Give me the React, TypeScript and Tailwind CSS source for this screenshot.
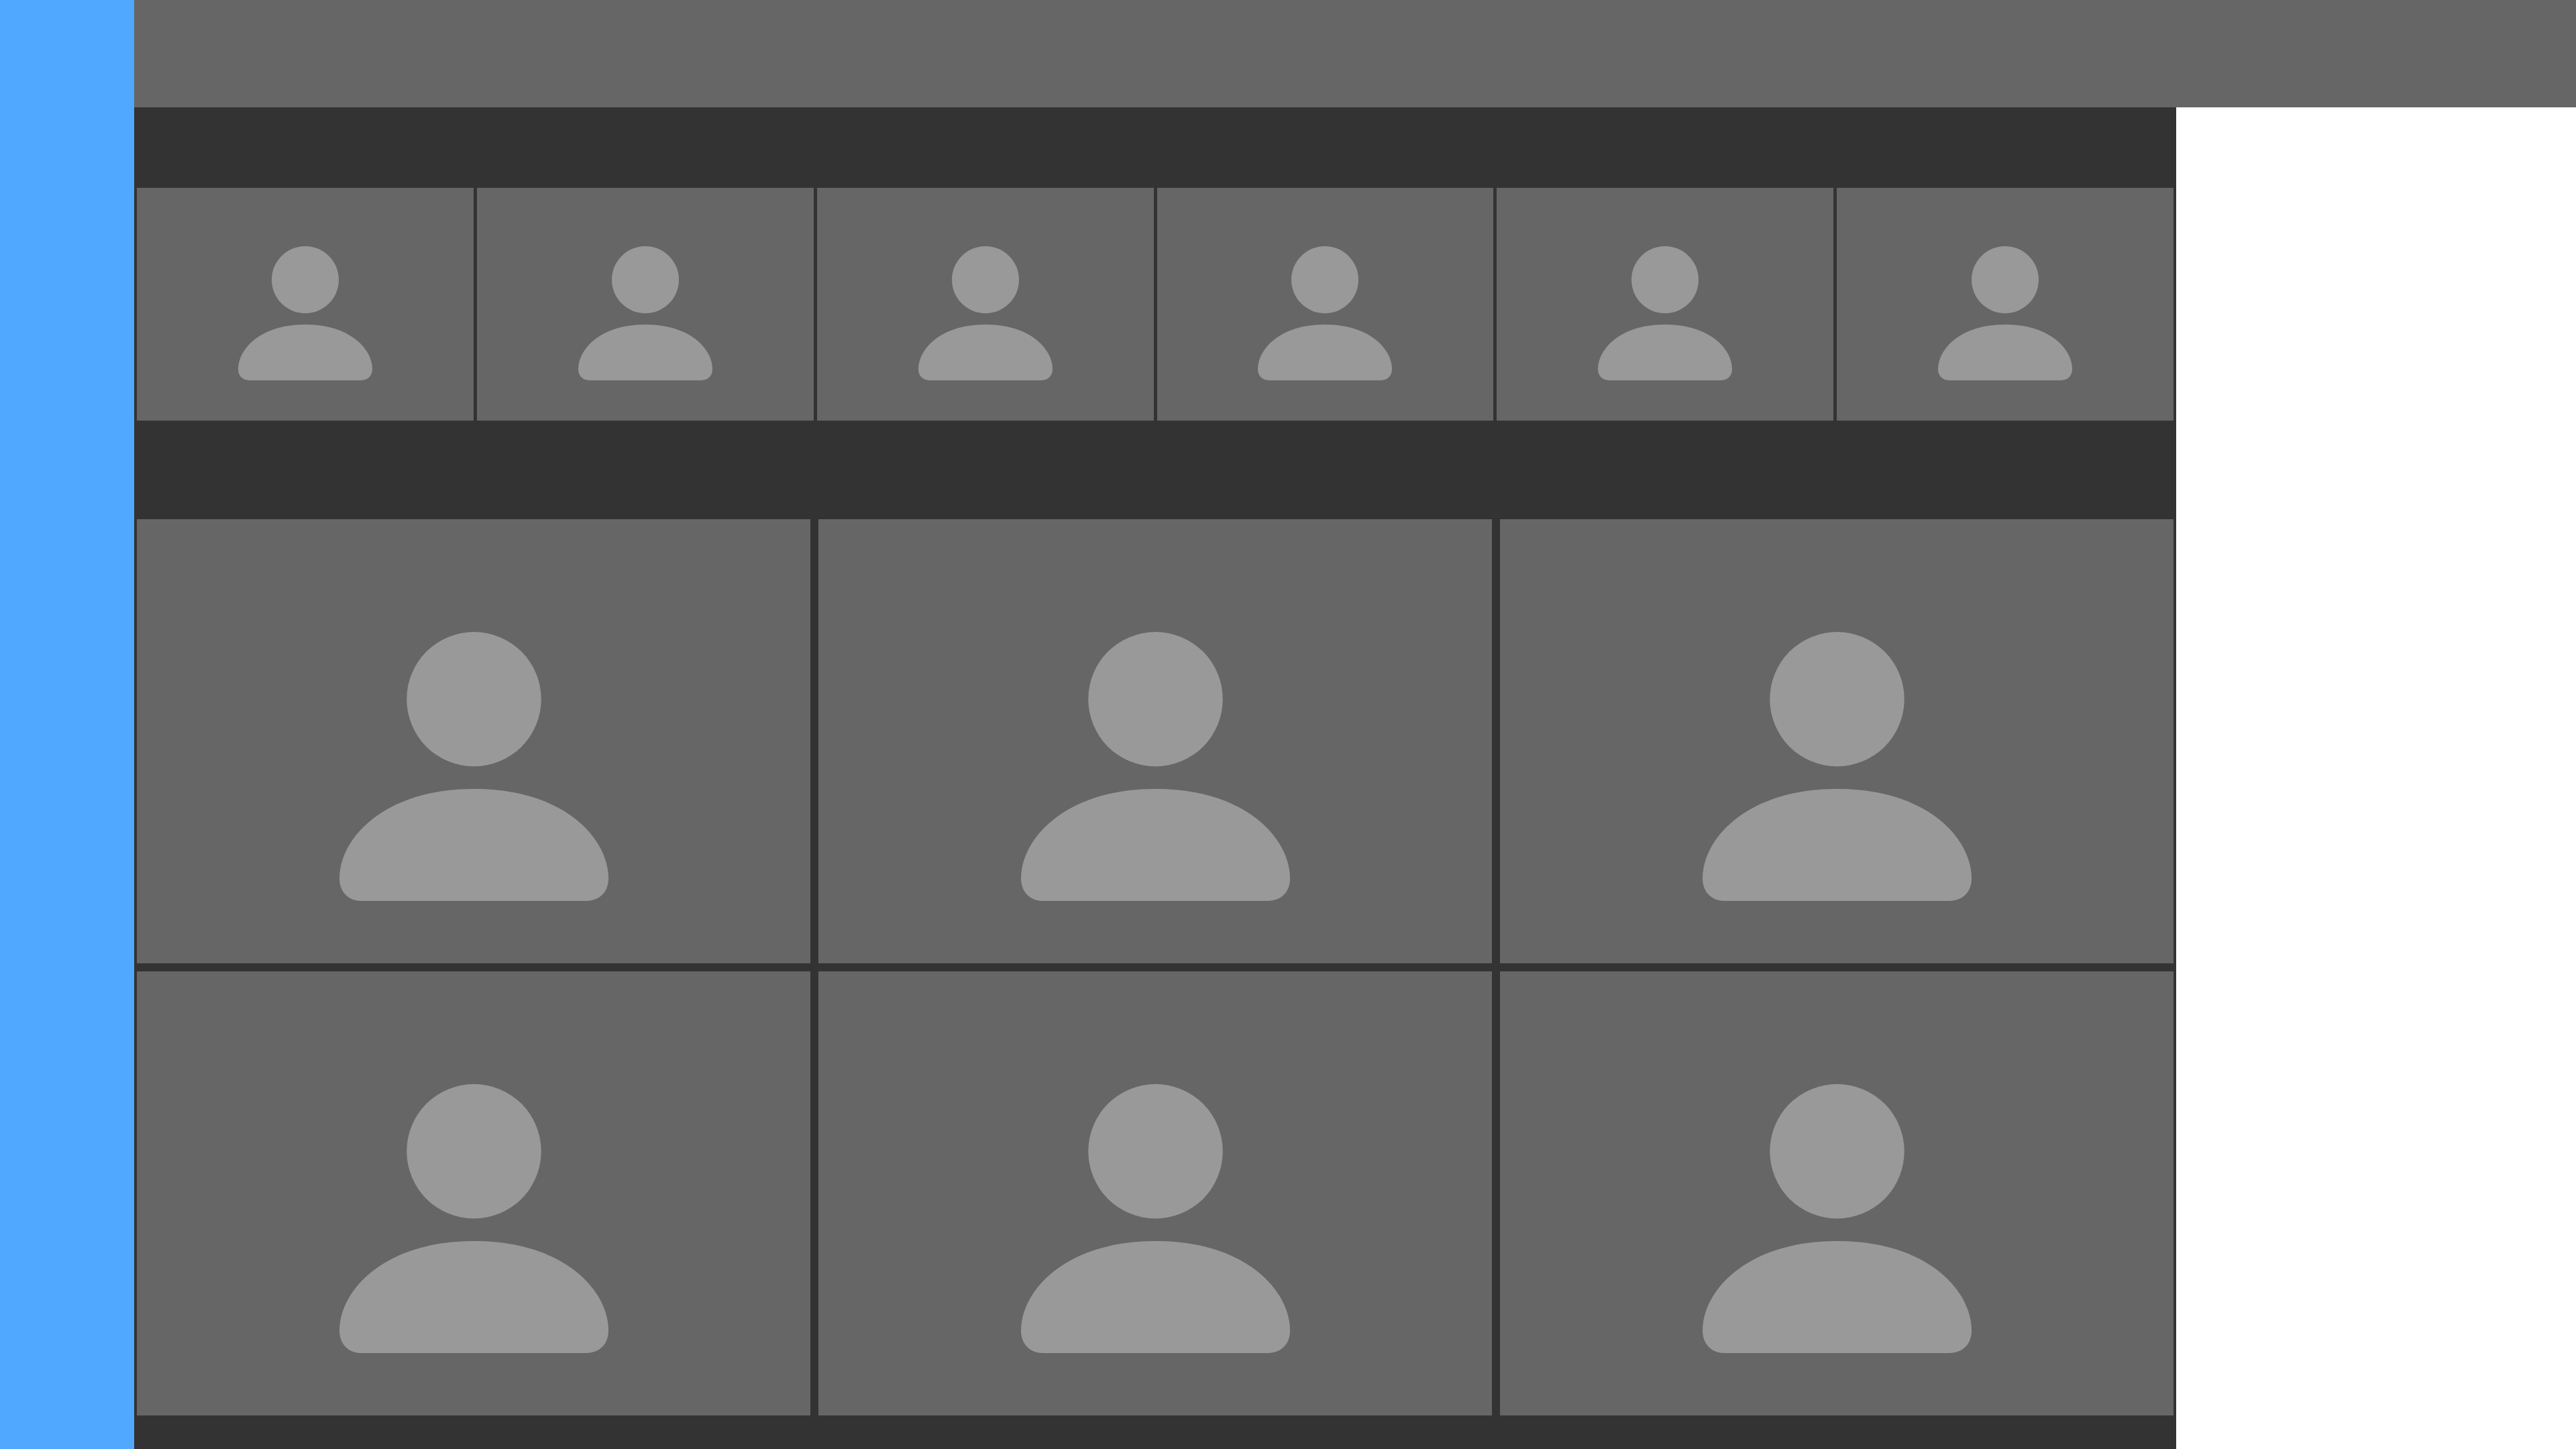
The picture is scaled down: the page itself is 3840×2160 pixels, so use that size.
import React from "react";

type TileSize = "small" | "large";

function PersonIcon({ size }: { size: TileSize }) {
  return (
    <svg
      viewBox="0 0 48 48"
      aria-hidden="true"
      className={size === "small" ? "size-[200px] fill-[#999999]" : "size-[401px] fill-[#999999]"}
    >
      <circle cx="24" cy="12" r="12" />
      <path d="M24 28C8 28 0 36.8 0 44C0 46.4 1.6 48 4 48H44C46.4 48 48 46.4 48 44C48 36.8 40 28 24 28Z" />
    </svg>
  );
}

function Tile({ size }: { size: TileSize }) {
  return (
    <li
      className={
        size === "small"
          ? "flex h-[347px] items-end justify-center bg-[#666666] pb-[60px]"
          : "flex h-[662px] items-end justify-center bg-[#666666] pb-[93px]"
      }
    >
      <PersonIcon size={size} />
    </li>
  );
}

export default function App() {
  return (
    <div className="flex min-h-screen bg-white">
      <nav className="w-[200px] shrink-0 bg-[#50a8ff]" />
      <div className="flex min-w-0 flex-1 flex-col">
        <header className="h-40 shrink-0 bg-[#666666]" />
        <div className="flex flex-1">
          <main className="min-w-0 flex-1 bg-[#333333] px-1 pt-[120px]">
            <ul className="grid grid-cols-6 gap-[5px]">
              {Array.from({ length: 6 }, (_, i) => (
                <Tile key={i} size="small" />
              ))}
            </ul>
            <ul className="mt-[147px] grid grid-cols-3 gap-3">
              {Array.from({ length: 6 }, (_, i) => (
                <Tile key={i} size="large" />
              ))}
            </ul>
          </main>
          <aside className="w-[596px] shrink-0 bg-white" />
        </div>
      </div>
    </div>
  );
}
